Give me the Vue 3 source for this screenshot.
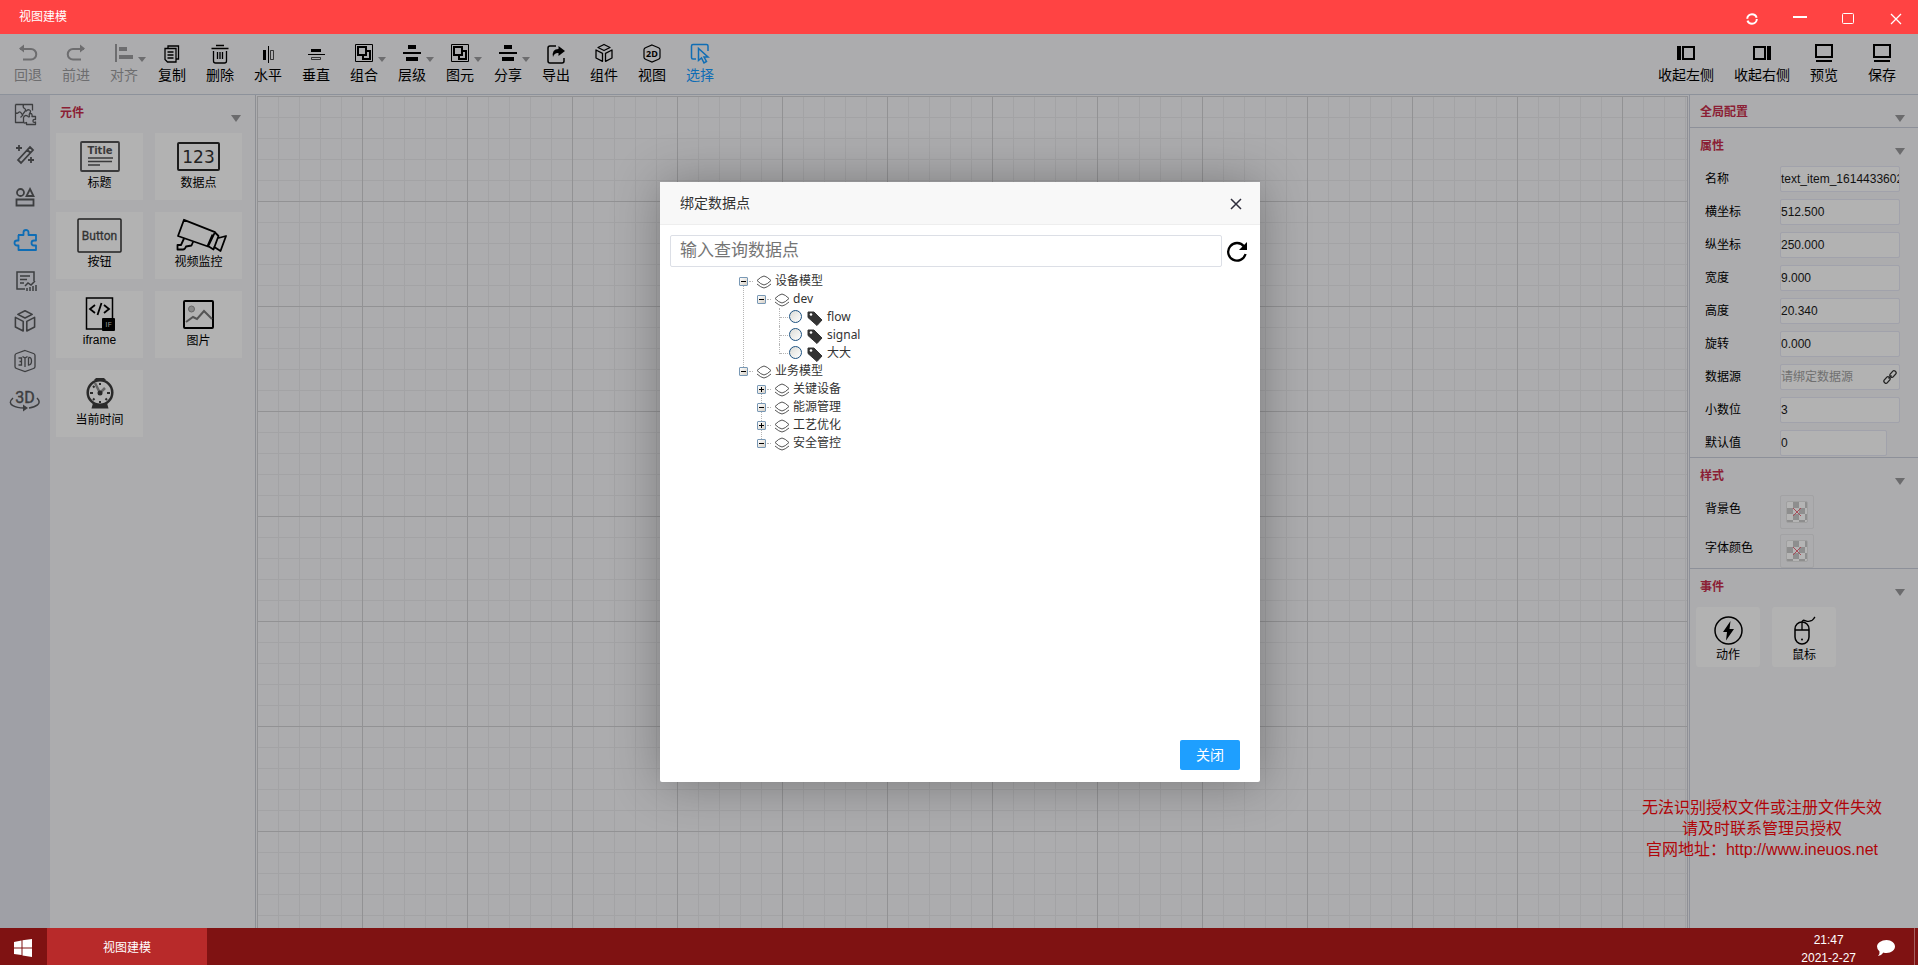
<script setup>
import { ref } from 'vue'

const cube = '<path d="M10 1.500l6 3-6 3-6-3zM2 7l6.500 3.300v8L2 15zM18 7l-6.500 3.300v8L18 15z" fill="none" stroke="currentColor" stroke-width="1.300" stroke-linejoin="round"/>'
const group = '<path d="M1.500 1.500h17v17h-17z" fill="none" stroke="currentColor"/><path d="M4 4h8v8H4zM12.500 8H16v8H9v-3.500" fill="none" stroke="currentColor" stroke-width="2"/>'
const level = '<path d="M6 2h8v4H6zM1 9h18v2H1zM4 14h12v4H4z" fill="currentColor"/>'

const tools = [
  { label: '回退', state: 'off', icon: '<path d="M2 6h11a5 5 0 0 1 0 10.500H5" fill="none" stroke="currentColor" stroke-width="2"/><path d="M6 1.500v8L1 5.500z" fill="currentColor"/>' },
  { label: '前进', state: 'off', icon: '<path d="M18 6H7a5 5 0 0 0 0 10.500h8" fill="none" stroke="currentColor" stroke-width="2"/><path d="M14 1.500v8l5-4z" fill="currentColor"/>' },
  { label: '对齐', state: 'off', caret: true, icon: '<path d="M1 1h2v18H1zM5 4h8v4H5zM5 12h14v4H5z" fill="currentColor"/>' },
  { label: '复制', icon: '<path d="M6 5V3h10.500v13h-2.500" fill="none" stroke="currentColor" stroke-width="1.300"/><path d="M3 5.500h11V19H5.500L3 16.500zM5.500 9h6M5.500 12h6M5.500 15h6" fill="none" stroke="currentColor" stroke-width="1.300"/>' },
  { label: '删除', icon: '<path d="M6 2.500h8M1.500 5.500h17M3.500 8v10q0 2 2 2h9q2 0 2-2V8M7.500 9v7M10 9v7M12.500 9v7" fill="none" stroke="currentColor" stroke-width="1.300"/>' },
  { label: '水平', icon: '<path d="M5 7h3v10H5z" fill="currentColor"/><path d="M10.500 3v17" stroke="currentColor"/><path d="M12.500 7.500h3v9h-3z" fill="none" stroke="currentColor" stroke-width=".7"/>' },
  { label: '垂直', icon: '<path d="M5 6h10v3H5zM2 11h17v1H2z" fill="currentColor"/><path d="M5.500 14.500h9v2h-9z" fill="none" stroke="currentColor" stroke-width=".7"/>' },
  { label: '组合', caret: true, icon: group },
  { label: '层级', caret: true, icon: level },
  { label: '图元', caret: true, icon: group },
  { label: '分享', caret: true, icon: level },
  { label: '导出', icon: '<path d="M10 3H4Q2 3 2 5v13q0 2 2 2h12q2 0 2-2v-3" fill="none" stroke="currentColor" stroke-width="1.500"/><path d="M12.500 3l6.500 5-6.500 5v-3Q8.500 9.500 7 14 5.500 6 12.500 6z" fill="currentColor"/>' },
  { label: '组件', icon: cube },
  { label: '视图', icon: '<path d="M10 2l6 2.500q2 .8 2 2v8q0 1.200-2 2L10 19l-6-2.500q-2-.8-2-2v-8q0-1.200 2-2z" fill="none" stroke="currentColor" stroke-width="1.200"/><text x="10" y="14" font-size="9" font-weight="700" text-anchor="middle" fill="currentColor" font-family="Open Sans, sans-serif">2D</text>' },
  { label: '选择', state: 'on', icon: '<path d="M6 16H3q-1.500 0-1.500-1.500V3Q1.500 1.500 3 1.500h13.500Q18 1.500 18 3v5" fill="none" stroke="currentColor" stroke-width="1.500"/><path d="M8.500 5.500v12l3-2.500 2.500 5 2.500-1.500-2.500-4.500h4z" fill="none" stroke="currentColor" stroke-width="1.500"/>' },
]

const actions = [
  { label: '收起左侧', icon: '<path d="M1 3h4v14H1z" fill="currentColor"/><path d="M7 4h11v12H7z" fill="none" stroke="currentColor" stroke-width="2"/>' },
  { label: '收起右侧', icon: '<path d="M15 3h4v14h-4z" fill="currentColor"/><path d="M2 4h11v12H2z" fill="none" stroke="currentColor" stroke-width="2"/>' },
  { label: '预览', icon: '<path d="M2 2h16v12H2zM2 18h16" fill="none" stroke="currentColor" stroke-width="2"/>' },
  { label: '保存', icon: '<path d="M2 2h16v12H2zM2 18h16" fill="none" stroke="currentColor" stroke-width="2"/>' },
]

const rail = [
  { label: '模板', box: '0 0 24 24', icon: '<path d="M2.500 2.500h17v6M2.500 2.500v18h9M10.500 2.500q-1 3 1 4t0 3.500-2 3-2 2.500M2.500 10.500q1.500 1.500 3 0t3 1 1.500 2M13 9.500q1.500-2.500 3.500-1.500t0 3.500M10.500 15.500q1.500-3 4-1.500 1 1.500 2 .5-1-3 1-3t1.500 3h3.500v3q-2.500-.5-2.500 1.500t2.500 1v2.500h-9v-2q-3 1.500-3-1t0-4z" fill="none" stroke="currentColor" stroke-width="1.300" stroke-linejoin="round"/>' },
  { label: '效果', box: '0 0 24 24', icon: '<path d="M5 18L17 5l3 3L8 21zM14.500 8l3 3M6 3v6M3 6h6M18 15v6M15 18h6" fill="none" stroke="currentColor" stroke-width="1.800"/>' },
  { label: '图形', box: '0 0 24 24', icon: '<path d="M3.500 14.500h17v6h-17zM17 4l3.500 7h-7z" fill="none" stroke="currentColor" stroke-width="1.800"/><circle cx="7.500" cy="7.500" r="3.500" fill="none" stroke="currentColor" stroke-width="1.800"/>' },
  { label: '元件', on: true, box: '0 0 24 24', icon: '<path d="M5 7h5.500V4.500a2.500 2.500 0 1 1 5 0V7H23v5.500h-2a2.500 2.500 0 0 0 0 5h2V22H5.500v-4.500H4a2.500 2.500 0 0 1 0-5h1.500V7" fill="none" stroke="currentColor" stroke-width="1.800" stroke-linejoin="round"/>' },
  { label: '报表', box: '0 0 24 24', icon: '<path d="M12 20H4V3h17v9M7 7h10M7 10.500h7M7 14h4M12 17l3-3 3 2 4-4M14 22v-3M17 22v-4M20 22v-5M23 22v-6" fill="none" stroke="currentColor" stroke-width="1.500"/>' },
  { label: '模型', box: '0 0 20 20', icon: cube },
  { label: '三维组件', box: '0 0 24 24', icon: '<path d="M12 1.500l8.500 3q1.500.5 1.500 2v11q0 1.500-1.500 2l-8.500 3-8.500-3Q2 19 2 17.500v-11Q2 5 3.500 4.500z" fill="none" stroke="currentColor" stroke-width="1.300"/><path d="M5.500 9h3v7h-3M6.500 12.500h2M9.500 7.500L12 9l2.500-1.500M12 9v9M15.500 8.500v7.500q3 0 3-4t-3-3.500" fill="none" stroke="currentColor" stroke-width="1.300"/>' },
  { label: '三维视图', wide: true, box: '0 0 32 24', icon: '<text x="16" y="14" font-size="16" text-anchor="middle" fill="currentColor" stroke="currentColor" stroke-width=".4" font-family="Roboto, sans-serif">3D</text><path d="M4 9C-4 16 8 19 15 19M28 9c6 6-2 9-8 10" fill="none" stroke="currentColor" stroke-width="1.500"/><path d="M14 15.500l5 3.500-5 3.500z" fill="currentColor"/>' },
]

const widgets = [
  { label: '标题', w: 42, h: 34, icon: '<rect x="2" y="2" width="38" height="29" rx="1" fill="none" stroke="#3a3a3b" stroke-width="1.800"/><text x="21" y="14" font-size="10" font-weight="700" text-anchor="middle" fill="#3a3a3b" font-family="DejaVu Sans, sans-serif">Title</text><path d="M9 18h25M9 21.500h24M9 25h12" stroke="#3a3a3b" stroke-width="1.500"/>' },
  { label: '数据点', w: 44, h: 34, icon: '<rect x="1" y="3" width="41" height="27" rx="1" fill="none" stroke="#1c1c1c" stroke-width="2"/><text x="21.500" y="22.500" font-size="17" text-anchor="middle" fill="#222" font-family="DejaVu Sans, sans-serif">123</text>' },
  { label: '按钮', w: 46, h: 34, icon: '<rect x="1" y="0" width="43" height="33" rx="1" fill="none" stroke="#222" stroke-width="1.500"/><text x="22.500" y="21" font-size="12" text-anchor="middle" fill="#333" stroke="#333" stroke-width=".3" font-family="Roboto, sans-serif">Button</text>' },
  { label: '视频监控', w: 52, h: 34, icon: '<path d="M11 .8l31 12.400-7 14.300L5 17zM42 13.500l3.500 3.500-5 13.500-5.500-3.500M45.500 19l7.500-2-5.500 15-7-4.500M39.500 15.500l-5 11.500M11 19.500l-3 6.500H4.500v4.500h5.500q2 0 3-3l5.500-1 1.500-3.500" fill="none" stroke="#000" stroke-width="1.800" stroke-linejoin="round"/>' },
  { label: 'iframe', w: 32, h: 33, icon: '<path d="M2.500 0h26v31h-26z" fill="none" stroke="#000" stroke-width="1.500"/><path d="M11 7l-5 4 5 4M20 7l5 4-5 4M17.500 5l-4 12" fill="none" stroke="#000" stroke-width="1.800"/><rect x="18" y="20" width="13" height="13" rx="1" fill="#000"/><text x="24.500" y="29" font-size="8" text-anchor="middle" fill="#999" font-family="Open Sans, sans-serif">IF</text>' },
  { label: '图片', w: 34, h: 34, icon: '<rect x="2" y="3" width="29" height="27" rx="1" fill="none" stroke="#000" stroke-width="2"/><circle cx="9.500" cy="11" r="3" fill="#888" stroke="#666"/><path d="M4 24l7-5 4 2 7-8 8 8" fill="none" stroke="#555" stroke-width="2"/>' },
  { label: '当前时间', w: 34, h: 34, icon: '<circle cx="17" cy="15.500" r="12.300" fill="none" stroke="#2a2a2a" stroke-width="2.500"/><path d="M11 3l2-2h8l2 2M10 26l-1.500 5.500h17L24 26l-7 2z" fill="#2a2a2a"/><path d="M17 6v2M7 16h3M24 16h3M17 24v2M10 9l1.500 1.500M24 23l-1.500-1.500M10 23l1.500-1.500" stroke="#2a2a2a" stroke-width="2"/><path d="M12 6l5 10 5-5" fill="none" stroke="#666" stroke-width="2.500"/><circle cx="17" cy="16" r="2.500" fill="#2a2a2a"/>' },
]

const fields = ref([
  { id: 'name', label: '名称', value: 'text_item_1614433602' },
  { id: 'pos-x', label: '横坐标', value: '512.500' },
  { id: 'pos-y', label: '纵坐标', value: '250.000' },
  { id: 'width', label: '宽度', value: '9.000' },
  { id: 'height', label: '高度', value: '20.340' },
  { id: 'rotate', label: '旋转', value: '0.000' },
  { id: 'source', label: '数据源', value: '', placeholder: '请绑定数据源', link: true },
  { id: 'digits', label: '小数位', value: '3' },
  { id: 'default', label: '默认值', value: '0', short: true },
])

const events = [
  { label: '动作', icon: '<circle cx="15.500" cy="14.500" r="13.500" fill="none" stroke="#000" stroke-width="1.500"/><path d="M17.500 5L10 16h4L13 24.500 21 13h-4.500z" fill="#000"/>' },
  { label: '鼠标', icon: '<rect x="6" y="6" width="14" height="22" rx="7" fill="none" stroke="#000" stroke-width="1.500"/><path d="M6 14h14M13 14V7c0-6 5 0 8-2 3 0 3-2 5-4" fill="none" stroke="#000" stroke-width="1.300"/><circle cx="13" cy="23.500" r="1" fill="#000"/>' },
]

const tree = [
  { label: '设备模型', open: true, children: [
    { label: 'dev', open: true, leaves: ['flow', 'signal', '大大'] },
  ] },
  { label: '业务模型', open: true, children: [
    { label: '关键设备', open: false },
    { label: '能源管理', open: true },
    { label: '工艺优化', open: false },
    { label: '安全管控', open: true },
  ] },
]

const query = ref('')
const picked = ref('')
</script>

<template>
  <div class="desktop">
    <header class="titlebar">
      <span>视图建模</span>
      <div class="controls">
        <button aria-label="刷新"><svg width="14" height="14" viewBox="0 0 14 14"><circle cx="7" cy="7" r="4.800" fill="none" stroke="#fff" stroke-width="2" stroke-dasharray="13 2" /></svg></button>
        <button aria-label="最小化"><svg width="14" height="14" viewBox="0 0 14 14"><path d="M0 5h14" stroke="#fff" stroke-width="2" /></svg></button>
        <button aria-label="最大化"><svg width="14" height="14" viewBox="0 0 14 14"><rect x="1.500" y="1.500" width="11" height="10" rx="1" fill="none" stroke="#fff" /></svg></button>
        <button aria-label="关闭窗口"><svg width="14" height="14" viewBox="0 0 14 14"><path d="M2 2l10 10M12 2L2 12" stroke="#fff" stroke-width="1.300" /></svg></button>
      </div>
    </header>

    <nav class="toolbar">
      <div class="tools">
        <button v-for="t in tools" :key="t.label" class="tool" :class="t.state" :disabled="t.state === 'off'">
          <svg width="20" height="20" viewBox="0 0 20 20" v-html="t.icon"></svg>
          <span>{{ t.label }}</span>
          <i v-if="t.caret" class="caret"></i>
        </button>
      </div>
      <div class="actions">
        <button v-for="a in actions" :key="a.label" class="tool">
          <svg width="20" height="20" viewBox="0 0 20 20" v-html="a.icon"></svg>
          <span>{{ a.label }}</span>
        </button>
      </div>
    </nav>

    <main class="work">
      <nav class="rail">
        <button v-for="r in rail" :key="r.label" :class="{ on: r.on, wide: r.wide }" :aria-label="r.label">
          <svg :viewBox="r.box" v-html="r.icon"></svg>
        </button>
      </nav>

      <aside class="library">
        <h2 class="head">元件<i class="arrow"></i></h2>
        <div class="cards">
          <button v-for="w in widgets" :key="w.label" class="card">
            <svg :width="w.w" :height="w.h" :viewBox="`0 0 ${w.w} ${w.h}`" v-html="w.icon"></svg>
            <span>{{ w.label }}</span>
          </button>
        </div>
      </aside>

      <section class="canvas"></section>

      <aside class="inspector">
        <section class="block">
          <h2 class="head">全局配置<i class="arrow"></i></h2>
        </section>
        <section class="block">
          <h2 class="head">属性<i class="arrow"></i></h2>
          <div v-for="f in fields" :key="f.id" class="field">
            <label :for="f.id">{{ f.label }}</label>
            <div class="box" :class="{ short: f.short }">
              <input :id="f.id" v-model="f.value" type="text" :placeholder="f.placeholder">
              <button v-if="f.link" aria-label="绑定"><svg width="14" height="14" viewBox="0 0 14 14"><g fill="none" stroke="#222" stroke-width="1.300"><rect x="6.500" y="2" width="7" height="4" rx="1.500" transform="rotate(-48 10 4)" /><rect x=".5" y="8" width="7" height="4" rx="1.500" transform="rotate(-48 4 10)" /><path d="M5.500 8.500l3-3" /></g></svg></button>
            </div>
          </div>
        </section>
        <section class="block">
          <h2 class="head">样式<i class="arrow"></i></h2>
          <div class="colors">
            <div v-for="c in ['背景色', '字体颜色']" :key="c" class="color">
              <span>{{ c }}</span>
              <button :aria-label="c"><i class="checker"><svg width="10" height="10" viewBox="0 0 10 10"><path d="M1 1l8 8M9 1L1 9" stroke="#a84b58" /></svg></i></button>
            </div>
          </div>
        </section>
        <section>
          <h2 class="head">事件<i class="arrow"></i></h2>
          <div class="events">
            <button v-for="e in events" :key="e.label">
              <svg width="30" height="30" viewBox="0 0 30 30" v-html="e.icon"></svg>
              <span>{{ e.label }}</span>
            </button>
          </div>
        </section>
      </aside>
    </main>

    <footer class="taskbar">
      <button class="start" aria-label="开始"><svg width="18" height="18" viewBox="0 0 18 18"><path d="M0 3l7.500-1.500v7H0zM8.500 1.300L18 0v8.500H8.500zM0 9.500h7.500V16L0 15zM8.500 9.500H18V18l-9.500-1.500z" fill="#fff" /></svg></button>
      <button class="task">视图建模</button>
      <div class="clock"><time>21:47</time><time>2021-2-27</time></div>
      <button class="chat" aria-label="消息"><svg width="20" height="18" viewBox="0 0 20 18"><path d="M10.500 1C15.500 1 19 4 19 7.500S15.500 14 10.500 14q-2 0-3-.5Q5.500 16.500 2 17q2-2 1.500-4.500Q1 10.500 1 7.500C1 4 5.500 1 10.500 1z" fill="#fff" /></svg></button>
      <i class="peek"></i>
    </footer>

    <p class="license">无法识别授权文件或注册文件失效<br>请及时联系管理员授权<br>官网地址：<a href="http://www.ineuos.net">http://www.ineuos.net</a></p>

    <div class="dialog" role="dialog" aria-label="绑定数据点">
      <header>
        <span>绑定数据点</span>
        <button aria-label="关闭对话框"><svg width="12" height="12" viewBox="0 0 12 12"><path d="M1 1l10 10M11 1L1 11" stroke="#2e2d3c" stroke-width="1.500" /></svg></button>
      </header>
      <div class="search">
        <input v-model="query" type="text" placeholder="输入查询数据点" aria-label="输入查询数据点">
        <button aria-label="重新加载"><svg width="22" height="22" viewBox="0 0 22 22"><path d="M18 6.500A8.800 8.800 0 1 0 19.500 14" fill="none" stroke="#000" stroke-width="2.300" /><path d="M21 2v8h-8z" fill="#000" /></svg></button>
      </div>
      <ul class="tree">
        <li v-for="root in tree" :key="root.label">
          <div class="node">
            <button class="switch" :class="{ plus: !root.open }" :aria-label="root.label"></button>
            <svg width="16" height="14" viewBox="0 0 16 14"><path d="M8 1Q11 1.500 15 5.500 11 9.500 8 10 5 9.500 1 5.500 5 1.500 8 1zM1 9q4 3.500 7 4 3-.5 7-4" fill="none" stroke="#555" /></svg>
            <span>{{ root.label }}</span>
          </div>
          <ul>
            <li v-for="child in root.children" :key="child.label">
              <div class="node">
                <button class="switch" :class="{ plus: !child.open }" :aria-label="child.label"></button>
                <svg width="16" height="14" viewBox="0 0 16 14"><path d="M8 1Q11 1.500 15 5.500 11 9.500 8 10 5 9.500 1 5.500 5 1.500 8 1zM1 9q4 3.500 7 4 3-.5 7-4" fill="none" stroke="#555" /></svg>
                <span>{{ child.label }}</span>
              </div>
              <ul v-if="child.leaves" class="leaves">
                <li v-for="leaf in child.leaves" :key="leaf">
                  <label class="leaf">
                    <input v-model="picked" type="radio" name="point" :value="leaf">
                    <svg width="16" height="16" viewBox="0 0 16 16"><path d="M1 2h6l8 8-5 5.500-9-8z" fill="#333" stroke="#333" stroke-linejoin="round" /><circle cx="4" cy="4.500" r="1.300" fill="#fff" /></svg>
                    <span>{{ leaf }}</span>
                  </label>
                </li>
              </ul>
            </li>
          </ul>
        </li>
      </ul>
      <footer><button>关闭</button></footer>
    </div>
  </div>
</template>

<style>
body {
  margin: 0;
}
</style>

<style scoped>
.desktop {
  position: relative;
  display: grid;
  grid-template-rows: 34px 61px 1fr 37px;
  height: 100vh;
  overflow: hidden;
  background: #acacae;
  color: #000;
  font: 12px/18px "Liberation Sans", "Noto Sans CJK SC", sans-serif;
}
.desktop * {
  box-sizing: border-box;
}
button {
  margin: 0;
  padding: 0;
  border: 0;
  background: none;
  color: inherit;
  font: inherit;
}
input {
  min-width: 0;
  font: inherit;
  outline: 0;
}
svg {
  display: block;
  flex: none;
  overflow: visible;
}

.titlebar {
  display: flex;
  align-items: center;
  justify-content: space-between;
  padding-left: 19px;
  background: #ff4343;
  color: #fff;
}
.controls {
  display: flex;
  gap: 4px;
  padding-top: 4px;
}
.controls button {
  display: grid;
  place-items: center;
  width: 44px;
  height: 30px;
}

.toolbar {
  display: flex;
  justify-content: space-between;
  padding: 9px 22px 0 4px;
  border-bottom: 1px solid #8d929b;
  font-size: 14px;
  line-height: 20px;
}
.tools,
.actions {
  display: flex;
  align-items: flex-start;
}
.actions {
  gap: 20px;
}
.actions .tool:last-child {
  margin-left: 10px;
}
.tool {
  position: relative;
  display: flex;
  flex-direction: column;
  align-items: center;
  gap: 2px;
  white-space: nowrap;
}
.tools .tool {
  width: 48px;
}
.off {
  color: #6d6d6f;
}
.on {
  color: #0f6db5;
}
.caret {
  position: absolute;
  right: 2px;
  top: 14px;
  border: 4px solid transparent;
  border-top: 5px solid #6d6d6f;
  border-bottom: 0;
}

.work {
  display: grid;
  grid-template-columns: 50px 206px 1fr 229px;
  min-height: 0;
}
.rail {
  display: flex;
  flex-direction: column;
  background: #9fa0a6;
  color: #3d3e40;
}
.rail button {
  display: grid;
  place-items: center;
  height: 40px;
}
.rail button:first-child {
  height: 38px;
}
.rail button:nth-child(2),
.rail button:nth-child(4) {
  height: 42px;
}
.rail button:nth-child(3) {
  height: 44px;
}
.rail .on {
  color: #0f6db5;
}
.rail svg {
  width: 24px;
  height: 24px;
}
.rail .wide svg {
  width: 32px;
}
.head {
  display: flex;
  align-items: center;
  justify-content: space-between;
  height: 33px;
  margin: 0;
  padding: 2px 13px 0 10px;
  color: #8b1f35;
  font-size: 12px;
  font-weight: 700;
  line-height: 18px;
}
.arrow {
  margin-top: 12px;
  border: 5px solid transparent;
  border-top: 7px solid #6b6b6d;
  border-bottom: 0;
}
.library {
  border-right: 1px solid #8d8f94;
}
.library .head {
  padding-right: 14px;
}
.cards {
  display: grid;
  grid-template-columns: 1fr 1fr;
  gap: 12px;
  padding: 5px 13px 0 6px;
}
.card {
  display: flex;
  flex-direction: column;
  align-items: center;
  height: 67px;
  padding-top: 7px;
  background: #b2b2b2;
}

.canvas {
  margin: 1px 1px 0 1px;
  border-right: 1px solid #8f9096;
  background-color: #acacae;
  background-image:
    linear-gradient(90deg, #929294 1px, transparent 1px),
    linear-gradient(#929294 1px, transparent 1px),
    linear-gradient(90deg, #a3a3a5 1px, transparent 1px),
    linear-gradient(#a3a3a5 1px, transparent 1px);
  background-size: 105px 105px, 105px 105px, 21px 21px, 21px 21px;
}

.inspector {
  border-left: 1px solid #8d9099;
}
.block {
  border-bottom: 1px solid #8d9099;
}
.block:first-child .head {
  height: 32px;
}
.field {
  display: grid;
  grid-template-columns: 75px 120px;
  align-items: center;
  height: 33px;
  padding: 2px 0 0 15px;
}
.box {
  display: flex;
  align-items: center;
  height: 26px;
  border: 1px solid #a1a2ab;
  border-radius: 2px;
  background: #b2b2b2;
}
.box.short {
  width: 107px;
}
.box input {
  flex: 1;
  width: 100%;
  height: 24px;
  padding: 0;
  border: 0;
  background: none;
  color: #111;
}
.box input::placeholder {
  color: #707070;
}
.box button {
  margin-right: 2px;
}
.block .field:last-child {
  height: 32px;
  padding-top: 4px;
}
.colors {
  display: grid;
  gap: 5px;
  padding: 4px 0 0 15px;
}
.color {
  display: grid;
  grid-template-columns: 75px 34px;
}
.color span {
  padding-top: 5px;
}
.color button {
  display: grid;
  place-items: center;
  height: 34px;
  border: 1px solid #a2a2a4;
  border-radius: 2px;
}
.checker {
  display: grid;
  place-items: center;
  width: 22px;
  height: 22px;
  border: 1px solid #a0a0a0;
  border-radius: 2px;
  background: repeating-conic-gradient(#8e8e8e 0 25%, #b5b5b5 0 50%) 0 0 / 12px 12px;
}
.events {
  display: flex;
  gap: 12px;
  padding: 5px 6px 0;
}
.events button {
  display: flex;
  flex-direction: column;
  align-items: center;
  width: 64px;
  height: 60px;
  padding-top: 9px;
  border-radius: 3px;
  background: #b2b2b2;
}

.taskbar {
  display: flex;
  align-items: stretch;
  background: #7f1212;
  color: #fff;
}
.start {
  display: grid;
  place-items: center;
  width: 47px;
  padding: 2px 2px 0 0;
}
.task {
  width: 160px;
  padding-top: 2px;
  background: #b82a2a;
}
.clock {
  display: flex;
  flex-direction: column;
  align-items: center;
  margin-left: auto;
  padding-top: 3px;
}
.chat {
  margin: 2px 18px 0 20px;
}
.peek {
  width: 4px;
  border-left: 1px solid #a56060;
}

.license {
  position: absolute;
  right: 36px;
  bottom: 105px;
  margin: 0;
  color: #b00509;
  font-size: 16px;
  line-height: 21px;
  text-align: center;
}
.license a {
  color: inherit;
  text-decoration: none;
}

.dialog {
  position: absolute;
  top: 50%;
  left: 50%;
  display: flex;
  flex-direction: column;
  width: 600px;
  height: 600px;
  margin: -301px 0 0 -299px;
  border-radius: 2px;
  background: #fff;
  box-shadow: 1px 1px 50px rgba(0, 0, 0, .3);
  color: #333;
}
.dialog header {
  display: flex;
  align-items: center;
  justify-content: space-between;
  height: 43px;
  padding: 0 18px 0 20px;
  border-bottom: 1px solid #eee;
  background: #f8f8f8;
  font-size: 14px;
  line-height: 20px;
}
.dialog header button {
  padding-top: 2px;
}
.search {
  display: flex;
  align-items: center;
  gap: 4px;
  padding: 10px 12px 0 10px;
}
.search input {
  flex: 1;
  height: 32px;
  padding: 0 9px;
  border: 1px solid #dcdfe6;
  border-radius: 2px;
  font-size: 17px;
}
.search input::placeholder {
  color: #757575;
}
.tree {
  flex: 1;
  margin: 0;
  padding: 5px 0 0 79px;
  font-family: "Noto Sans", "Noto Sans CJK SC", sans-serif;
}
.tree ul {
  margin: 0;
  padding: 0 0 0 18px;
}
.tree li {
  position: relative;
  list-style: none;
}
.tree li:not(:last-child)::before {
  content: "";
  position: absolute;
  top: 14px;
  bottom: -5px;
  left: 4px;
  border-left: 1px dotted #b5b5b5;
}
.node,
.leaf {
  display: flex;
  align-items: center;
  height: 18px;
}
.node svg {
  margin: 2px 3px 0 2px;
}
.switch {
  position: relative;
  width: 9px;
  height: 9px;
  margin: 1px 6px 0 0;
  border: 1px solid #7898b5;
  border-radius: 1px;
  background: linear-gradient(#000, #000) center / 5px 1px no-repeat, linear-gradient(135deg, #fff, #d5cfc6);
}
.switch.plus {
  background: linear-gradient(#000, #000) center / 5px 1px no-repeat, linear-gradient(#000, #000) center / 1px 5px no-repeat, linear-gradient(135deg, #fff, #d5cfc6);
}
.switch::after {
  content: "";
  position: absolute;
  top: 3px;
  left: 9px;
  width: 4px;
  border-top: 1px dotted #b5b5b5;
}
.tree .leaves li::before {
  content: "";
  position: absolute;
  top: 0;
  bottom: 0;
  left: 4px;
  border-left: 1px dotted #b5b5b5;
}
.tree .leaves li:last-child::before {
  bottom: 8px;
}
.leaf {
  padding-left: 14px;
}
.leaf::before {
  content: "";
  position: absolute;
  top: 9px;
  left: 5px;
  width: 8px;
  border-top: 1px dotted #b5b5b5;
}
.leaf input {
  appearance: none;
  width: 13px;
  height: 13px;
  margin: 0 5px 0 0;
  border: 1px solid #1d5281;
  border-radius: 50%;
  background: linear-gradient(135deg, #dcdcd7, #fff);
}
.leaf svg {
  margin: 2px 4px 0 0;
}
.dialog footer {
  display: flex;
  justify-content: flex-end;
  padding: 0 20px 12px;
}
.dialog footer button {
  width: 60px;
  height: 30px;
  border-radius: 2px;
  background: #1e9fff;
  color: #fff;
  font-size: 14px;
}
</style>
